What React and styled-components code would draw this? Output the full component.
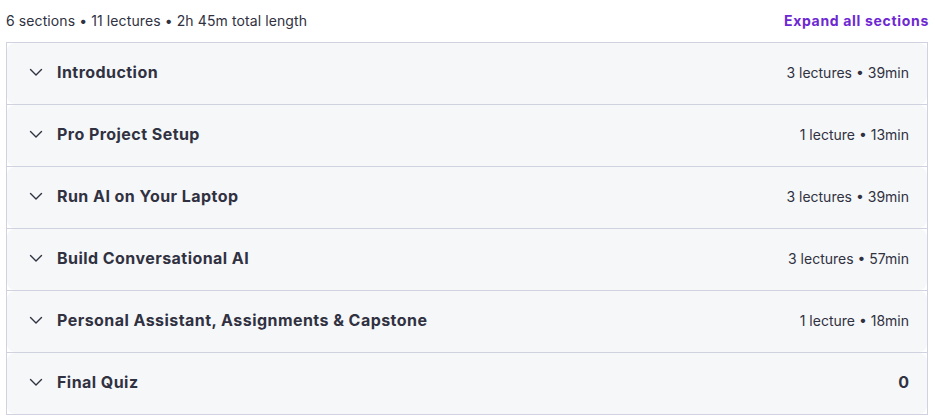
import React from "react";
import styled, { createGlobalStyle } from "styled-components";

const GlobalStyle = createGlobalStyle`
  body {
    margin: 0;
    background: #fff;
    font-family: "Inter", "Noto Sans", sans-serif;
    color: #303141;
  }
`;

const Page = styled.div`
  padding: 0 7px 0 6px;
`;

const Summary = styled.div`
  display: flex;
  align-items: center;
  justify-content: space-between;
  height: 40px;
  padding-bottom: 2px;
  margin-right: -1px;
`;

const SummaryText = styled.span`
  font-size: 14px;
  letter-spacing: 0.1px;
  color: #303141;
`;

const ExpandLink = styled.button`
  border: none;
  background: none;
  padding: 0;
  font-family: inherit;
  font-size: 14px;
  font-weight: 700;
  letter-spacing: 0.68px;
  color: #6d28d2;
  cursor: pointer;
`;

const Accordion = styled.div`
  border: 1px solid #d1d2e0;
`;

const Section = styled.div`
  & + & {
    border-top: 1px solid #d1d2e0;
  }
`;

const SectionHeader = styled.button`
  display: flex;
  align-items: center;
  width: 100%;
  height: 61px;
  padding: 0 18px 0 21px;
  border: none;
  border-radius: 8px;
  background: #f6f7f9;
  font-family: inherit;
  color: #303141;
  text-align: left;
  cursor: pointer;
`;

const Chevron = styled.svg`
  flex: none;
  width: 16px;
  height: 16px;
  margin-right: 13px;
  margin-top: -3px;
`;

const Title = styled.span`
  flex: 1;
  font-size: 16px;
  font-weight: 700;
  letter-spacing: 0.45px;
  margin-top: -3px;
`;

const Meta = styled.span`
  font-size: ${({ $bold }) => ($bold ? "16px" : "14px")};
  font-weight: ${({ $bold }) => ($bold ? 700 : 400)};
  margin-top: -3px;
`;

const sections = [
  { title: "Introduction", meta: "3 lectures • 39min" },
  { title: "Pro Project Setup", meta: "1 lecture • 13min" },
  { title: "Run AI on Your Laptop", meta: "3 lectures • 39min" },
  { title: "Build Conversational AI", meta: "3 lectures • 57min" },
  { title: "Personal Assistant, Assignments & Capstone", meta: "1 lecture • 18min" },
  { title: "Final Quiz", meta: "0", bold: true },
];

export default function App() {
  return (
    <>
      <GlobalStyle />
      <Page>
        <Summary>
          <SummaryText>6 sections • 11 lectures • 2h 45m total length</SummaryText>
          <ExpandLink>Expand all sections</ExpandLink>
        </Summary>
        <Accordion>
          {sections.map((s) => (
            <Section key={s.title}>
              <SectionHeader>
                <Chevron viewBox="0 0 16 16" fill="none">
                  <path
                    d="M2.5 5.5 L8 11 L13.5 5.5"
                    stroke="#303141"
                    strokeWidth="1.4"
                    strokeLinecap="round"
                    strokeLinejoin="round"
                  />
                </Chevron>
                <Title>{s.title}</Title>
                <Meta $bold={s.bold}>{s.meta}</Meta>
              </SectionHeader>
            </Section>
          ))}
        </Accordion>
      </Page>
    </>
  );
}
